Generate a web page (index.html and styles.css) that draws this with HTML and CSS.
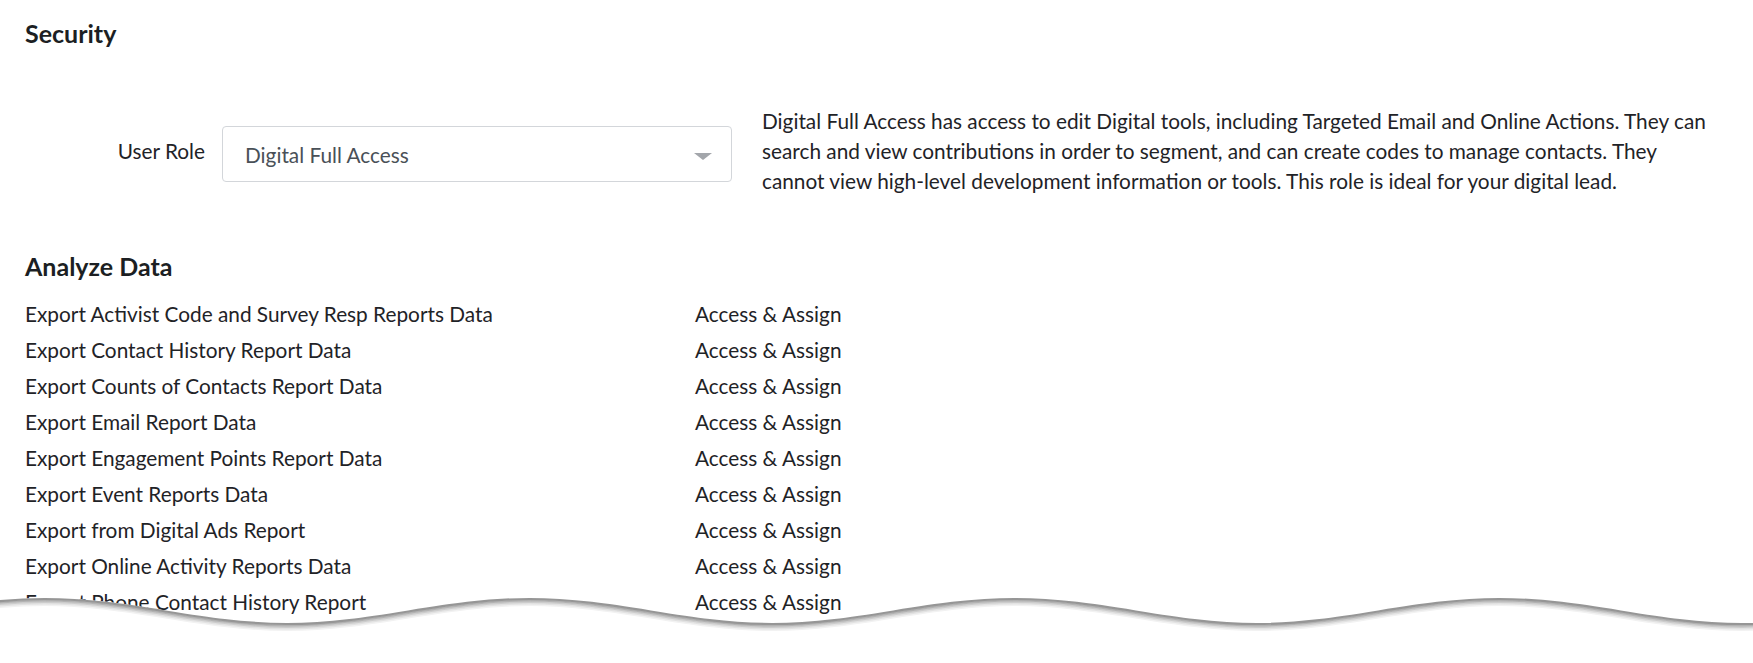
FILE: index.html
```html
<!DOCTYPE html>
<html lang="en">
<head>
<meta charset="utf-8">
<title>Security</title>
<link rel="stylesheet" href="styles.css">
</head>
<body>
<div class="page">
  <h2 class="section-title">Security</h2>
  <div class="role-row">
    <label class="role-label">User Role</label>
    <div class="select">
      <span class="select-value">Digital Full Access</span>
      <span class="caret"></span>
    </div>
    <p class="role-desc">Digital Full Access has access to edit Digital tools, including Targeted Email and Online Actions. They can search and view contributions in order to segment, and can create codes to manage contacts. They<br>cannot view high-level development information or tools. This role is ideal for your digital lead.</p>
  </div>

  <h2 class="section-title analyze">Analyze Data</h2>
  <div class="perm-list">
    <div class="perm"><span class="perm-name">Export Activist Code and Survey Resp Reports Data</span><span class="perm-level">Access &amp; Assign</span></div>
    <div class="perm"><span class="perm-name">Export Contact History Report Data</span><span class="perm-level">Access &amp; Assign</span></div>
    <div class="perm"><span class="perm-name">Export Counts of Contacts Report Data</span><span class="perm-level">Access &amp; Assign</span></div>
    <div class="perm"><span class="perm-name">Export Email Report Data</span><span class="perm-level">Access &amp; Assign</span></div>
    <div class="perm"><span class="perm-name">Export Engagement Points Report Data</span><span class="perm-level">Access &amp; Assign</span></div>
    <div class="perm"><span class="perm-name">Export Event Reports Data</span><span class="perm-level">Access &amp; Assign</span></div>
    <div class="perm"><span class="perm-name">Export from Digital Ads Report</span><span class="perm-level">Access &amp; Assign</span></div>
    <div class="perm"><span class="perm-name">Export Online Activity Reports Data</span><span class="perm-level">Access &amp; Assign</span></div>
    <div class="perm"><span class="perm-name">Export Phone Contact History Report</span><span class="perm-level">Access &amp; Assign</span></div>
  </div>
</div>

<svg class="torn-edge" viewBox="0 580 1753 83" width="1753" height="83" aria-hidden="true">
  <defs>
    <path id="wave" d="M -198 623 C -111 623 -42.5 598 44.5 598 C 131.5 598 200 623 287 623 C 374 623 442.5 598 529.5 598 C 616.5 598 685 623 772 623 C 859 623 927.5 598 1014.5 598 C 1101.5 598 1170 623 1257 623 C 1344 623 1412.5 598 1499.5 598 C 1586.5 598 1655 623 1742 623 C 1829 623 1897.5 598 1984.5 598"/>
  </defs>
  <path fill="#ffffff" d="M -198 623 C -111 623 -42.5 598 44.5 598 C 131.5 598 200 623 287 623 C 374 623 442.5 598 529.5 598 C 616.5 598 685 623 772 623 C 859 623 927.5 598 1014.5 598 C 1101.5 598 1170 623 1257 623 C 1344 623 1412.5 598 1499.5 598 C 1586.5 598 1655 623 1742 623 C 1829 623 1897.5 598 1984.5 598 L 1984.5 700 L -198 700 Z"/>
  <use href="#wave" fill="none" stroke="#f2f2f2" stroke-width="2" transform="translate(0 7)"/>
  <use href="#wave" fill="none" stroke="#e2e2e2" stroke-width="2" transform="translate(0 5.5)"/>
  <use href="#wave" fill="none" stroke="#cccccc" stroke-width="2" transform="translate(0 4)"/>
  <use href="#wave" fill="none" stroke="#b2b2b2" stroke-width="2" transform="translate(0 2.5)"/>
  <use href="#wave" fill="none" stroke="#969696" stroke-width="2.2" transform="translate(0 1)"/>
</svg>
</body>
</html>
```

FILE: styles.css
```css
html, body {
  margin: 0;
  padding: 0;
  background: #ffffff;
  overflow: hidden;
}

body {
  width: 1753px;
  height: 663px;
  font-family: Lato, "Open Sans", "Noto Sans", sans-serif;
  font-size: 20.8px;
  color: #1f2327;
}

.page {
  padding: 18px 20px 0 25px;
}

.section-title {
  margin: 0;
  font-size: 25px;
  line-height: 30px;
  font-weight: 700;
  color: #1c1f23;
}

.role-row {
  display: flex;
  align-items: flex-start;
  margin-top: 58px;
}

.role-label {
  width: 180px;
  padding-top: 30px;
  line-height: 30px;
  text-align: right;
}

.select {
  margin-left: 17px;
  margin-top: 20px;
  width: 510px;
  height: 56px;
  box-sizing: border-box;
  border: 1px solid #d3d6da;
  border-radius: 4px;
  display: flex;
  align-items: center;
  padding: 0 19px 0 22px;
}

.select-value {
  flex: 1;
  color: #495057;
  line-height: 30px;
  padding-top: 2px;
}

.caret {
  width: 0;
  height: 0;
  border-left: 9px solid transparent;
  border-right: 9px solid transparent;
  border-top: 7px solid #a3a6ab;
  margin-top: 4px;
}

.role-desc {
  margin: 0 0 0 30px;
  width: 971px;
  line-height: 30px;
}

.analyze {
  margin-top: 55px;
}

.perm-list {
  margin-top: 15px;
}

.perm {
  display: grid;
  grid-template-columns: 670px auto;
  height: 36px;
  line-height: 36px;
}

.torn-edge {
  position: absolute;
  left: 0;
  top: 580px;
  display: block;
}
```
